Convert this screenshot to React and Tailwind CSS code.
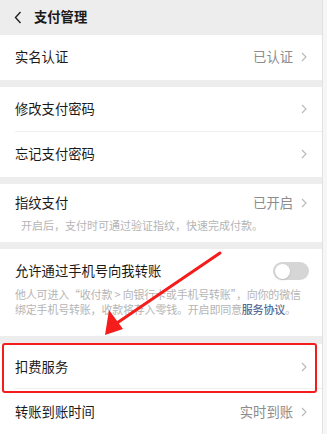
import React from 'react';

const Chevron = () => (
    <svg width="6" height="10" viewBox="0 0 6 10" className="ml-[8px]">
        <path d="M1 1l4 4-4 4" fill="none" stroke="#b8b8b8" strokeWidth="1.1" />
    </svg>
);

const Row = ({ title, value, divider }) => (
    <div className="relative h-[45px] flex items-center justify-between pl-[15px] pr-[15px] bg-white">
        <span className="text-[13.3px] text-[#1a1a1a]">{title}</span>
        <div className="flex items-center">
            {value && <span className="text-[13.3px] text-[#8c8c8c]">{value}</span>}
            <Chevron />
        </div>
        {divider && <div className="absolute left-[15px] right-0 bottom-0 h-px bg-[#efefef]" />}
    </div>
);

const Toggle = () => (
    <div className="w-[36px] h-[18px] rounded-full bg-[#d6d6d6] p-[1.5px] flex items-center">
        <div className="w-[15px] h-[15px] rounded-full bg-white shadow-sm" />
    </div>
);

export default function App() {
    return (
        <div
            className="relative w-[327px] h-[434px] overflow-hidden flex bg-[#ededed]"
            style={{ fontFamily: '"Noto Sans CJK SC", "Noto Sans", sans-serif' }}
        >
            <div className="w-[322px] flex flex-col">
                <div className="h-[35px] flex items-center pl-[14px] bg-[#ededed]">
                    <svg width="8" height="13" viewBox="0 0 8 13">
                        <path d="M6.5 1L1.5 6.5l5 5.5" fill="none" stroke="#222" strokeWidth="1.4" />
                    </svg>
                    <span className="ml-[12px] text-[13.3px] font-semibold text-[#1a1a1a]">支付管理</span>
                </div>

                <Row title="实名认证" value="已认证" />
                <div className="h-[7px]" />
                <Row title="修改支付密码" divider />
                <Row title="忘记支付密码" />
                <div className="h-[7px]" />

                <div className="bg-white h-[59px] pl-[15px] pr-[15px] pt-[9px]">
                    <div className="flex items-center justify-between">
                        <span className="text-[13.3px] text-[#1a1a1a]">指纹支付</span>
                        <div className="flex items-center">
                            <span className="text-[13.3px] text-[#8c8c8c]">已开启</span>
                            <Chevron />
                        </div>
                    </div>
                    <p className="mt-[5px] pl-[6px] text-[11px] leading-[15px] text-[#b5b5b5]">
                        开启后，支付时可通过验证指纹，快速完成付款。
                    </p>
                </div>
                <div className="h-[7px]" />

                <div className="bg-white h-[87px] pl-[15px] pr-[13px] pt-[12px]">
                    <div className="flex items-center justify-between">
                        <span className="text-[13.3px] text-[#1a1a1a]">允许通过手机号向我转账</span>
                        <Toggle />
                    </div>
                    <p className="mt-[6px] text-[11px] leading-[15px] text-[#b5b5b5] tracking-[-0.2px]">
                        他人可进入“收付款 &gt; 向银行卡或手机号转账”，向你的微信绑定手机号转账，收款将存入零钱。开启即同意<span className="text-[#576b95] font-medium">服务协议</span>。
                    </p>
                </div>
                <div className="h-[8px]" />

                <Row title="扣费服务" divider />
                <Row title="转账到账时间" value="实时到账" />
            </div>
            <div className="flex-1 border-l border-[#e2e2e2] bg-[#f6f6f6]" />

            <div className="absolute left-[2px] top-[343px] w-[315px] h-[50px] border-2 border-[#f51c1c] rounded-[3px]" />

            <svg className="absolute left-0 top-0" width="327" height="434" viewBox="0 0 327 434">
                <path d="M220 253 L114 325" stroke="#f51c1c" strokeWidth="3" strokeLinecap="round" />
                <path d="M105 335 L109 310 L123 329 Z" fill="#f51c1c" />
            </svg>
        </div>
    );
}
